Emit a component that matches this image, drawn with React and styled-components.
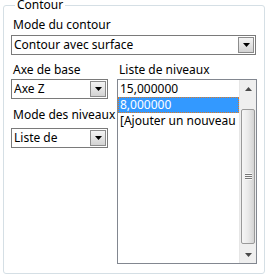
import React from 'react';
import styled, { createGlobalStyle } from 'styled-components';

const GlobalStyle = createGlobalStyle`
  html, body {
    margin: 0;
    padding: 0;
    background: #fff;
  }
  body {
    font-family: "Noto Sans", "Open Sans", sans-serif;
    font-size: 12px;
    color: #000;
  }
`;

const Group = styled.fieldset`
  box-sizing: border-box;
  width: 262px;
  height: 274px;
  margin: 0 5px 0 3px;
  padding: 8px 7px 0 7px;
  border: 1px solid #d5dfe5;
  border-radius: 3px;
`;

const Legend = styled.legend`
  margin-left: 4px;
  padding: 0 2px;
  line-height: 10px;
  font-size: 12px;
`;

const Label = styled.div`
  line-height: 14px;
  height: 14px;
  padding-left: 2px;
  margin-top: ${p => p.$top || 0}px;
  margin-bottom: ${p => p.$gap || 3}px;
  white-space: nowrap;
`;

const Combo = styled.div`
  box-sizing: border-box;
  width: ${p => p.$width}px;
  height: 20px;
  border: 1px solid #7a7a7a;
  display: flex;
  align-items: center;
  padding: 0 1px 0 2px;
  background: #fff;
`;

const ComboText = styled.span`
  flex: 1;
  line-height: 16px;
  white-space: nowrap;
  overflow: hidden;
`;

const DropButton = styled.div`
  box-sizing: border-box;
  width: 16px;
  height: 16px;
  border: 1px solid #8c8c8c;
  background: linear-gradient(#f4f4f4, #e4e4e4 50%, #d3d3d3);
  display: flex;
  align-items: center;
  justify-content: center;
`;

const Columns = styled.div`
  display: grid;
  grid-template-columns: 97px 140px;
  column-gap: 9px;
  margin-top: 8px;
`;

const Column = styled.div`
  display: flex;
  flex-direction: column;
`;

const ListBox = styled.div`
  box-sizing: border-box;
  width: 140px;
  height: 185px;
  border: 1px solid #828790;
  display: flex;
  background: #fff;
`;

const Items = styled.div`
  flex: 1;
  padding-top: 1px;
  overflow: hidden;
`;

const Item = styled.div`
  box-sizing: border-box;
  height: 16px;
  line-height: 16px;
  padding-left: 2px;
  white-space: nowrap;
  overflow: hidden;
  background: ${p => (p.$selected ? '#3399ff' : 'transparent')};
  color: ${p => (p.$selected ? '#fff' : '#000')};
  outline: ${p => (p.$selected ? '1px dotted #e07b22' : 'none')};
  outline-offset: -1px;
`;

const ScrollBar = styled.div`
  width: 17px;
  display: flex;
  flex-direction: column;
  background: #efefef;
  border-left: 1px solid #e6e6e6;
  box-sizing: border-box;
`;

const ArrowButton = styled.div`
  height: 17px;
  display: flex;
  align-items: center;
  justify-content: center;
`;

const Track = styled.div`
  flex: 1;
  display: flex;
  flex-direction: column;
  padding: 12px 0 2px;
`;

const Thumb = styled.div`
  flex: 1;
  margin: 0 1px;
  border: 1px solid #9a9a9a;
  border-radius: 2px;
  background: linear-gradient(to right, #f6f6f6, #eaeaea 50%, #d4d4d4);
  display: flex;
  align-items: center;
  justify-content: center;
`;

const Grip = styled.div`
  width: 7px;
  height: 7px;
  background: repeating-linear-gradient(#f8f8f8 0 1px, #777 1px 2px);
`;

const Triangle = ({ up, color = '#000' }) => (
  <svg width="7" height="4" viewBox="0 0 7 4">
    <polygon points={up ? '3.5,0 7,4 0,4' : '0,0 7,0 3.5,4'} fill={color} />
  </svg>
);

const ComboBox = ({ width, children }) => (
  <Combo $width={width}>
    <ComboText>{children}</ComboText>
    <DropButton>
      <Triangle />
    </DropButton>
  </Combo>
);

export default function App() {
  return (
    <>
      <GlobalStyle />
      <Group>
        <Legend>Contour</Legend>
        <Label>Mode du contour</Label>
        <ComboBox width={245}>Contour avec surface</ComboBox>
        <Columns>
          <Column>
            <Label $gap={2}>Axe de base</Label>
            <ComboBox width={97}>Axe Z</ComboBox>
            <Label $top={9} $gap={6}>Mode des niveaux</Label>
            <ComboBox width={97}>Liste de</ComboBox>
          </Column>
          <Column>
            <Label $gap={2}>Liste de niveaux</Label>
            <ListBox>
              <Items>
                <Item>15,000000</Item>
                <Item $selected>8,000000</Item>
                <Item>[Ajouter un nouveau niveau]</Item>
              </Items>
              <ScrollBar>
                <ArrowButton>
                  <Triangle up color="#4a4a4a" />
                </ArrowButton>
                <Track>
                  <Thumb>
                    <Grip />
                  </Thumb>
                </Track>
                <ArrowButton>
                  <Triangle color="#4a4a4a" />
                </ArrowButton>
              </ScrollBar>
            </ListBox>
          </Column>
        </Columns>
      </Group>
    </>
  );
}
